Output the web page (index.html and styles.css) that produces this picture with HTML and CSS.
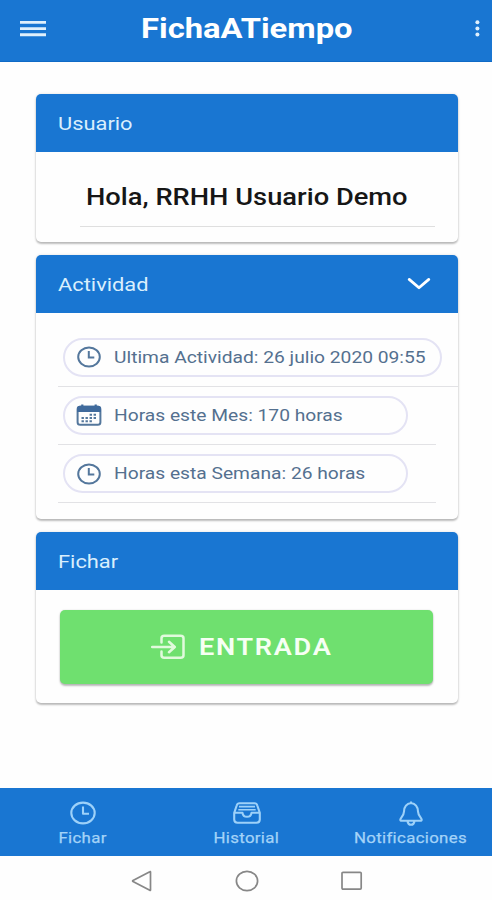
FILE: index.html
```html
<!DOCTYPE html>
<html lang="es">
<head>
<meta charset="utf-8">
<title>FichaATiempo</title>
<link rel="stylesheet" href="styles.css">
</head>
<body>
<header class="topbar">
  <svg class="menu" width="26" height="18" viewBox="0 0 26 18"><path d="M0 2.4H26M0 8.6H26M0 14.8H26"/></svg>
  <h1 class="title"><span class="wide">FichaATiempo</span></h1>
  <svg class="dots" width="6" height="18" viewBox="0 0 6 18"><circle cx="3.4" cy="2.2" r="2"/><circle cx="3.4" cy="8.4" r="2"/><circle cx="3.4" cy="14.6" r="2"/></svg>
</header>
<main class="content">
  <section class="card card-user">
    <h2 class="card-head"><span class="wide">Usuario</span></h2>
    <p class="greeting"><span class="wide">Hola, RRHH Usuario Demo</span></p>
  </section>
  <section class="card card-activity">
    <h2 class="card-head"><span class="wide">Actividad</span>
      <svg class="chevron" width="24" height="14" viewBox="0 0 24 14"><path d="M2.2 2.4L12 10.8L21.8 2.4"/></svg>
    </h2>
    <ul class="rows">
      <li class="row row-full"><div class="pill pill-long">
        <svg class="icon" width="26" height="24" viewBox="0 0 26 24"><ellipse cx="13" cy="12" rx="10.8" ry="9.5"/><path d="M12.8 6V12.4H18.3"/></svg>
        <span class="wide">Ultima Actividad: 26 julio 2020 09:55</span></div></li>
      <li class="row"><div class="pill">
        <svg class="icon" width="26" height="24" viewBox="0 0 26 24"><rect x="1.6" y="3.8" width="22.8" height="18" rx="2.6"/><path class="solid" d="M1 8.9V5.6Q1 2.8 4 2.8H5.2V1.4H7.4V2.8H18.6V1.4H20.8V2.8H22Q25 2.8 25 5.6V8.9Z"/><path class="days" d="M13.6 11.8H21.5M13.6 15H21.5M5.5 15H13M5.5 18.3H17.5"/></svg>
        <span class="wide">Horas este Mes: 170 horas</span></div></li>
      <li class="row"><div class="pill">
        <svg class="icon" width="26" height="24" viewBox="0 0 26 24"><ellipse cx="13" cy="12" rx="10.8" ry="9.5"/><path d="M12.8 6V12.4H18.3"/></svg>
        <span class="wide">Horas esta Semana: 26 horas</span></div></li>
    </ul>
  </section>
  <section class="card card-clock">
    <h2 class="card-head"><span class="wide">Fichar</span></h2>
    <button class="enter">
      <svg class="enter-icon" width="34" height="26" viewBox="0 0 34 26"><path d="M10.5 8.5V4.2Q10.5 1.7 13.3 1.7H29.5Q32.5 1.7 32.5 4.2V21.3Q32.5 23.8 29.5 23.8H13.3Q10.5 23.8 10.5 21.3V17.5M1.2 13H23.5M18 7.8L23.8 13L18 18.2"/></svg>
      <span class="wide">ENTRADA</span>
    </button>
  </section>
</main>
<nav class="tabs">
  <a class="tab"><svg width="28" height="24" viewBox="0 0 28 24"><ellipse cx="14" cy="12" rx="11.7" ry="10.4"/><path d="M14 5.5V12.8H20"/></svg><span class="wide">Fichar</span></a>
  <a class="tab"><svg width="28" height="24" viewBox="0 0 28 24"><path d="M6.5 2.3H21.5Q23.7 2.3 24.3 4.5L26.8 11.8V18.5Q26.8 21.7 23.5 21.7H4.5Q1.2 21.7 1.2 18.5V11.8L3.7 4.5Q4.3 2.3 6.5 2.3ZM1.2 11.8H9.5Q10 15.8 14 15.8Q18 15.8 18.5 11.8H26.8"/><path class="thin" d="M6 5.6H22M5.3 8.7H22.7"/></svg><span class="wide">Historial</span></a>
  <a class="tab"><svg width="28" height="26" viewBox="0 0 28 26"><path d="M14 2C8.5 2.8 7.2 6.3 7 10.5C6.8 15 3.6 16.5 3.3 18.7Q3.2 19.8 4.5 19.8H23.5Q24.8 19.8 24.7 18.7C24.4 16.5 21.2 15 21 10.5C20.8 6.3 19.5 2.8 14 2ZM10.5 20Q11 23.8 14 23.8Q17 23.8 17.5 20M14 .6V2"/></svg><span class="wide">Notificaciones</span></a>
</nav>
<footer class="sysnav">
  <svg width="22" height="22" viewBox="0 0 22 22"><path d="M19.5 2V20Q19.5 20.7 18.8 20.3L2 11.5Q1.2 11 2 10.5L18.8 1.7Q19.5 1.3 19.5 2Z"/></svg>
  <svg width="24" height="22" viewBox="0 0 24 22"><ellipse cx="12" cy="11" rx="10.6" ry="9.6"/></svg>
  <svg width="22" height="22" viewBox="0 0 22 22"><rect x="1" y="2.3" width="19.2" height="16.8" rx="1"/></svg>
</footer>
</body>
</html>
```
FILE: styles.css
```css
* { box-sizing: border-box; }
body {
  margin: 0;
  height: 900px;
  display: flex;
  flex-direction: column;
  overflow: hidden;
  background: #fefefe;
  font-family: Roboto, "Liberation Sans", sans-serif;
}
h1, h2, p, ul { margin: 0; padding: 0; }
svg { fill: none; flex: none; display: block; }
.wide {
  display: inline-block;
  white-space: nowrap;
  transform: scaleX(1.137);
  transform-origin: left center;
}
.topbar {
  height: 62px;
  padding: 0 12px 4px 20px;
  display: flex;
  align-items: center;
  background: #1976d2;
  border-bottom: 1px solid #0f6ac6;
}
.menu { stroke: #e0f0fc; stroke-width: 2.9; }
.dots { fill: #dff0fd; margin-left: auto; }
.title { margin-left: 95px; font-size: 28px; line-height: 32px; font-weight: 700; color: #fff; }
.title .wide { transform: scaleX(1.17); }
.content { flex: 1; padding: 32px 34.5px 0 36px; }
.card {
  background: #fefefe;
  border-radius: 5px;
  overflow: hidden;
  box-shadow: 0 2px 2px rgba(0,0,0,.24), 0 0 3px rgba(0,0,0,.12);
}
.card-user { height: 148px; margin-bottom: 12.5px; }
.card-activity { height: 264.5px; margin-bottom: 12.5px; }
.card-clock { height: 171.5px; }
.card-head {
  height: 58px;
  padding: 1px 27px 0 22px;
  display: flex;
  align-items: center;
  justify-content: space-between;
  background: #1976d2;
  color: #d9effd;
  font-size: 19px;
  font-weight: 400;
}
.card-head .wide { transform: scaleX(1.15); }
.chevron { stroke: #fff; stroke-width: 2.8; stroke-linecap: round; stroke-linejoin: round; }
.greeting {
  margin: 15px 22.5px 0 44px;
  height: 59.5px;
  padding: 14px 0 0 6px;
  border-bottom: 1px solid #dfdfdf;
  font-size: 24px;
  line-height: 32px;
  font-weight: 500;
  color: #161616;
}
.rows { list-style: none; padding: 16px 0 0 22px; }
.row { height: 58.3px; padding: 9px 0 0 5px; margin-right: 22px; border-bottom: 1px solid #e2e2e5; }
.row-full { margin-right: 0; }
.pill {
  width: 345px;
  height: 39px;
  padding-left: 11px;
  display: flex;
  align-items: center;
  gap: 12px;
  border: 2px solid #e4e3f4;
  border-radius: 20px;
  color: #54708f;
  font-size: 17px;
}
.pill .wide { transform: scaleX(1.13); margin-top: -1px; }
.pill-long { width: 379px; }
.icon { stroke: #54779c; stroke-width: 2; }
.icon .solid { fill: #3f6a9c; stroke: none; }
.icon .days { stroke-width: 2; stroke-dasharray: 2.4 1.6; }
.enter {
  display: flex;
  align-items: center;
  width: 373px;
  height: 74px;
  margin: 20.5px 0 0 24px;
  padding: 0 0 0 91px;
  gap: 14px;
  border: 0;
  border-radius: 5px;
  background: #6fe06f;
  box-shadow: 0 2px 2px rgba(0,0,0,.26), 0 0 2px rgba(0,0,0,.14);
  color: #f6fff4;
  font: 600 24px/30px Roboto, sans-serif;
  letter-spacing: 1.5px;
}
.enter .wide { transform: scaleX(1.13); }
.enter-icon { stroke: #e1fadd; stroke-width: 2.5; stroke-linecap: round; stroke-linejoin: round; }
.tabs {
  height: 68px;
  display: grid;
  grid-template-columns: repeat(3, 1fr);
  background: #1976d2;
  color: #a4d3f8;
  font-size: 15px;
  line-height: 20px;
  letter-spacing: .3px;
}
.tab { display: flex; flex-direction: column; align-items: center; justify-content: space-between; padding: 13px 0 8px 1px; }
.tab svg { stroke: #9dd1f9; stroke-width: 2.1; stroke-linejoin: round; }
.tab .thin { stroke-width: 1.6; }
.tab .wide { transform: scaleX(1.12); transform-origin: center; -webkit-text-stroke: .25px currentColor; }
.sysnav {
  height: 44px;
  padding: 5px 0 0 2px;
  display: flex;
  justify-content: center;
  align-items: center;
  gap: 82px;
}
.sysnav svg { stroke: #878787; stroke-width: 1.7; }
```
